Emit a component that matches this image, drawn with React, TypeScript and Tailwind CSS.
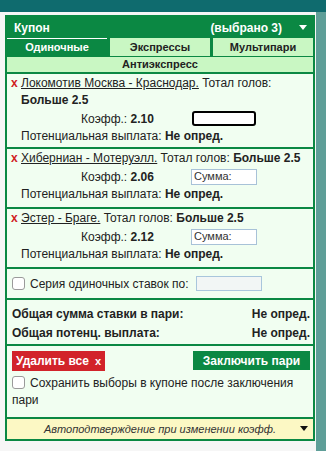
import React from 'react';

interface Selection {
  id: number;
  match: string;
  market: string;
  outcome: string;
  odds: string;
  focused?: boolean;
}

const selections: Selection[] = [
  { id: 1, match: 'Локомотив Москва - Краснодар.', market: 'Тотал голов:', outcome: 'Больше 2.5', odds: '2.10', focused: true },
  { id: 2, match: 'Хиберниан - Мотеруэлл.', market: 'Тотал голов:', outcome: 'Больше 2.5', odds: '2.06' },
  { id: 3, match: 'Эстер - Браге.', market: 'Тотал голов:', outcome: 'Больше 2.5', odds: '2.12' },
];

const tabs = ['Одиночные', 'Экспрессы', 'Мультипари'];

const Caret: React.FC<{ color: string }> = ({ color }) => (
  <svg width="8" height="5" viewBox="0 0 8 5">
    <path d="M0 0 L8 0 L4 5 Z" fill={color} />
  </svg>
);

const Checkbox: React.FC = () => (
  <span className="inline-block w-[13px] h-[13px] rounded-[3px] border border-[#9a9a9a] bg-white align-[-2px] shrink-0" />
);

const App: React.FC = () => {
  return (
    <div className="w-[326px] h-[451px] bg-[#f6f6f6] flex flex-col font-['Liberation_Sans',Arial,sans-serif] text-[12px] text-[#222]">
      <div className="h-[12px] bg-[#0f6b6e]" />
      <div className="flex flex-1">
        <div className="flex-1 pt-[3px] pl-[5px]">
          <div className="w-[310px] border-2 border-[#0b8843] bg-[#0b8843]">
            {/* шапка купона */}
            <div className="h-[21px] flex items-center justify-between pl-[7px] pr-[6px] text-white font-bold">
              <span>Купон</span>
              <div className="flex items-center gap-[17px]">
                <span>(выбрано 3)</span>
                <Caret color="#ffffff" />
              </div>
            </div>

            {/* вкладки */}
            <div className="grid grid-cols-3 gap-x-[3px] h-[17px] text-[11px] font-bold">
              {tabs.map((t, i) => (
                <div
                  key={t}
                  className={
                    i === 0
                      ? 'flex items-center justify-center bg-[#0b8843] text-white border-t border-white'
                      : 'flex items-center justify-center bg-[#c9f7c3] text-[#222]'
                  }
                >
                  {t}
                </div>
              ))}
            </div>
            <div className="mt-[2px] mb-[2px] h-[15px] flex items-center justify-center bg-[#c9f7c3] text-[11px] font-bold">
              Антиэкспресс
            </div>

            <div className="bg-[#f1fef1]">
              {selections.map(s => (
                <div
                  key={s.id}
                  className={
                    s.focused
                      ? 'flex pl-[4px] pr-[2px] pt-[1px] pb-[2px] border-b-2 border-[#0b8843]'
                      : 'flex pl-[4px] pr-[2px] pt-[1px] pb-[4px] border-b-2 border-[#0b8843]'
                  }
                >
                  <span className="w-[10px] shrink-0 leading-[17px] font-bold text-[#d0201f]">x</span>
                  <div className="flex-1">
                    <div className="leading-[17px]">
                      <span className="underline">{s.match}</span> {s.market} <b>{s.outcome}</b>
                    </div>
                    <div className="h-[19px] flex items-center pl-[60px]">
                      <span className="w-[110px]">
                        Коэфф.: <b>{s.odds}</b>
                      </span>
                      {s.focused ? (
                        <input className="w-[64px] h-[15px] ml-[1px] rounded-[3px] border-2 border-black bg-white outline-none" />
                      ) : (
                        <input
                          placeholder="Сумма:"
                          className="w-[66px] h-[16px] border border-[#a8c2d8] bg-white px-[2px] text-[11px] placeholder:text-[#333] outline-none"
                        />
                      )}
                    </div>
                    <div className="leading-[17px]">
                      Потенциальная выплата: <b>Не опред.</b>
                    </div>
                  </div>
                </div>
              ))}

              {/* серия */}
              <div className="h-[31px] flex items-center pl-[5px] border-b-2 border-[#0b8843]">
                <Checkbox />
                <span className="ml-[5px] w-[166px]">Серия одиночных ставок по:</span>
                <input className="w-[66px] h-[15px] border border-[#a9c6dc] bg-[#f2f6f5] outline-none" />
              </div>

              {/* итоги */}
              <div className="pl-[5px] pr-[3px] pt-[5px] pb-[1px] font-bold leading-[19px] border-b-2 border-[#0b8843]">
                <div className="flex justify-between">
                  <span>Общая сумма ставки в пари:</span>
                  <span>Не опред.</span>
                </div>
                <div className="flex justify-between">
                  <span>Общая потенц. выплата:</span>
                  <span>Не опред.</span>
                </div>
              </div>

              {/* кнопки */}
              <div className="pt-[5px] pb-[8px] pl-[5px] pr-[3px]">
                <div className="flex justify-between items-start">
                  <button className="h-[20px] w-[93px] bg-[#d2232a] text-white font-bold flex items-center justify-center gap-[6px]">
                    <span>Удалить все</span>
                    <span className="text-[11px]">x</span>
                  </button>
                  <button className="h-[19px] w-[117px] bg-[#0b8843] text-white font-bold flex items-center justify-center">
                    Заключить пари
                  </button>
                </div>
                <div className="mt-[4px] leading-[17px]">
                  <Checkbox />
                  <span className="ml-[5px]">Сохранить выборы в купоне после заключения пари</span>
                </div>
              </div>

              {/* автоподтверждение */}
              <div className="relative h-[22px] border-t-2 border-[#0b8843] bg-[#fcf8c4] flex items-center justify-center italic text-[11px] text-[#333]">
                Автоподтверждение при изменении коэфф.
                <span className="absolute right-[5px] top-[7px]">
                  <Caret color="#111111" />
                </span>
              </div>
            </div>
          </div>
        </div>
        <div className="w-[10px] bg-[#5e9e98]" />
      </div>
    </div>
  );
};

export default App;
